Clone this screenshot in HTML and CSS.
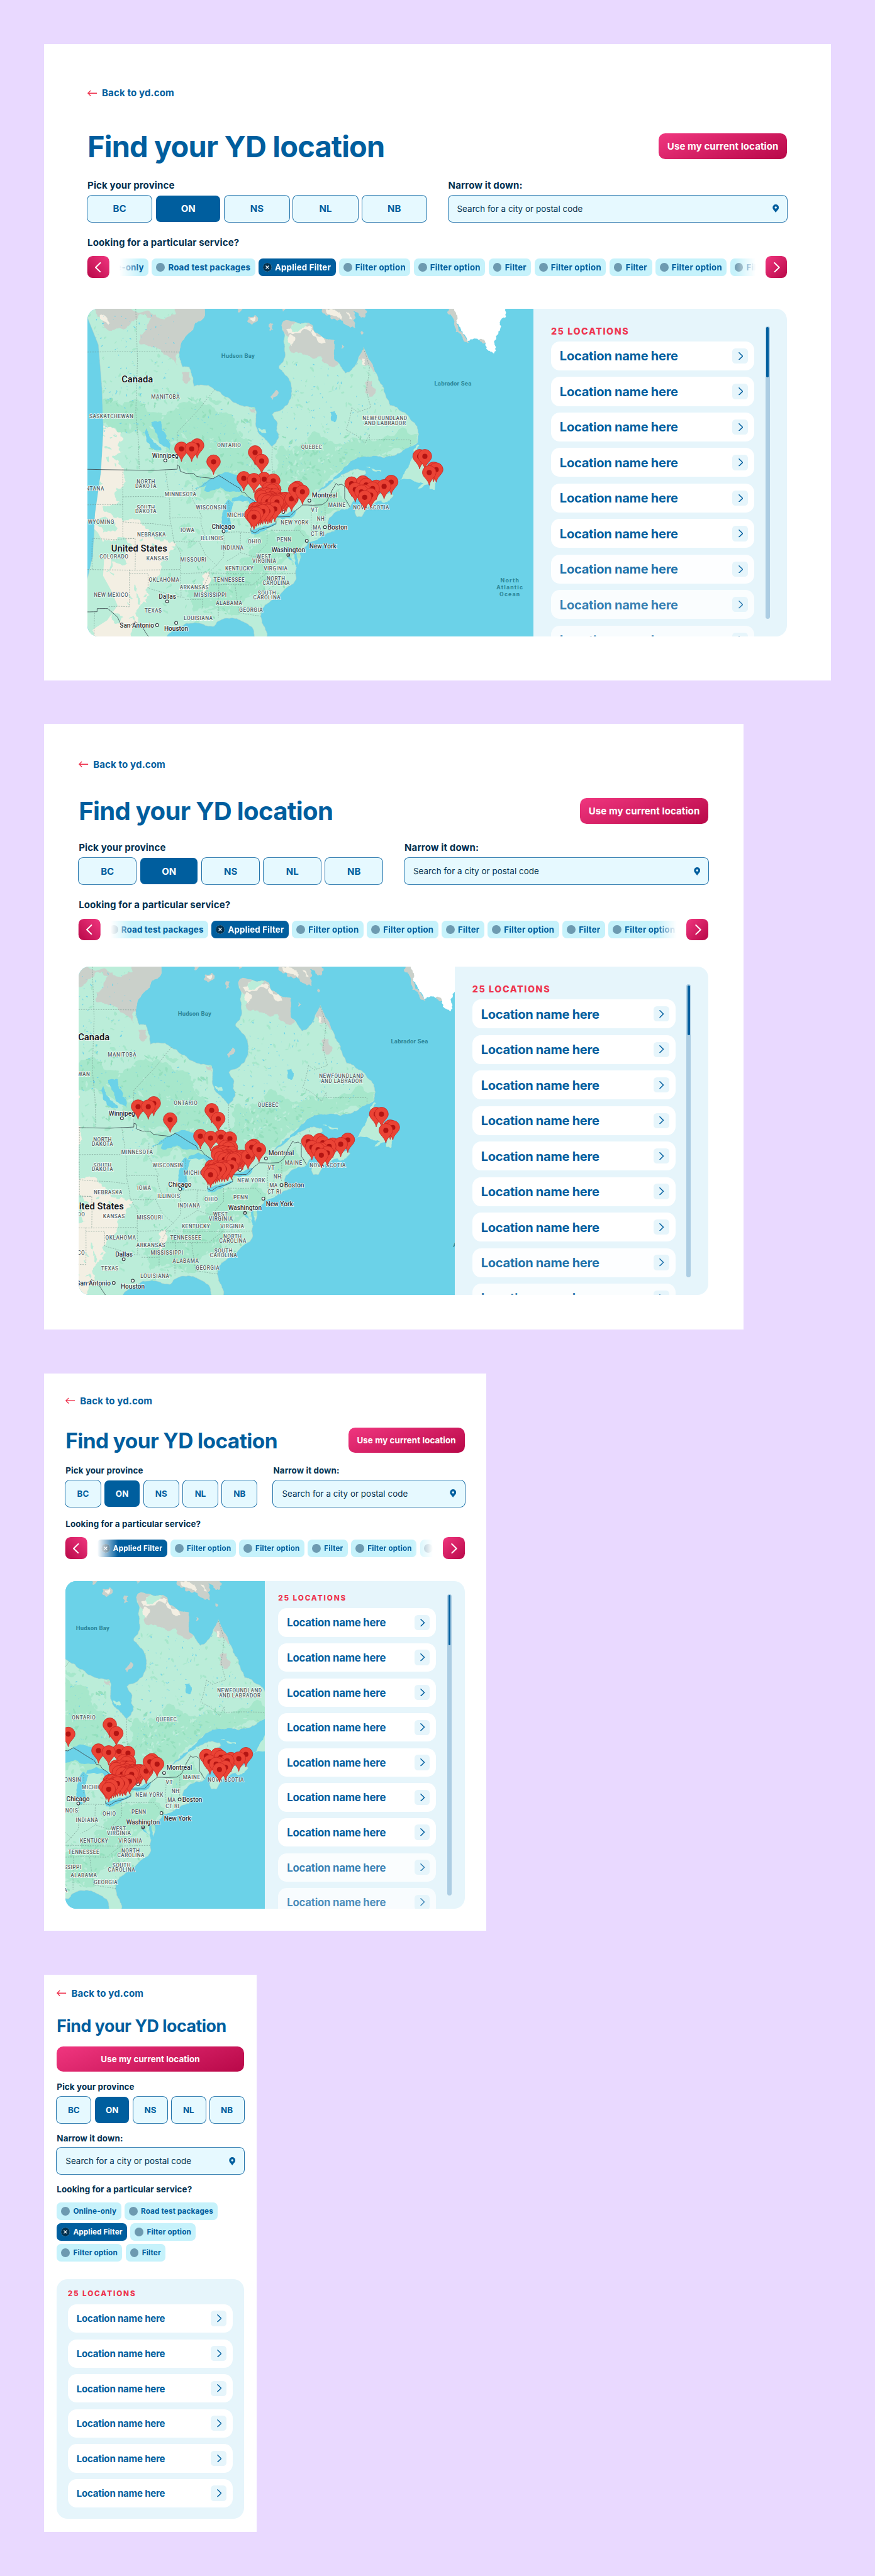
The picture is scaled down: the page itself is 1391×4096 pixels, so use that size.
FILE: index.html
```html
<!DOCTYPE html>
<html lang="en">
<head>
<meta charset="utf-8">
<title>Find your YD location</title>
<link rel="stylesheet" href="styles.css">
</head>
<body>
<svg class="sprite" aria-hidden="true">
  <symbol id="arrow" viewBox="0 0 18 12"><path d="M17.5 6H1M6 1 1 6l5 5" fill="none" stroke="#ee334e" stroke-width="1.6"/></symbol>
  <symbol id="chevron" viewBox="0 0 10 16"><path d="M1.2 1 8.4 8l-7.2 7" fill="none" stroke="currentColor" stroke-width="1.9" stroke-linecap="round" stroke-linejoin="round"/></symbol>
  <symbol id="pin" viewBox="0 0 12 15"><path d="M6 0a5.7 5.7 0 0 0-5.7 5.7C.3 9.4 4 11.500 6 15c2-3.500 5.700-5.600 5.700-9.300A5.700 5.700 0 0 0 6 0zm0 3.700a2 2 0 1 1 0 4 2 2 0 0 1 0-4z" fill="#005e9e"/></symbol>
  <symbol id="cross" viewBox="0 0 16 16"><circle cx="8" cy="8" r="8" fill="#00304f"/><path d="m5.200 5.200 5.600 5.600m0-5.600-5.600 5.600" stroke="#fff" stroke-width="1.300"/></symbol>
</svg>

<main class="board">

<section class="frame frame-xl">
  <a class="back"><svg class="back-arrow"><use href="#arrow"/></svg>Back to yd.com</a>
  <header class="heading"><h1>Find your YD location</h1><button class="cta">Use my current location</button></header>
  <div class="fields">
    <div class="field"><div class="label">Pick your province</div><div class="provinces"><span>BC</span><span class="on">ON</span><span>NS</span><span>NL</span><span>NB</span></div></div>
    <div class="field"><div class="label">Narrow it down:</div><div class="search">Search for a city or postal code<svg class="pin"><use href="#pin"/></svg></div></div>
  </div>
  <div class="label service">Looking for a particular service?</div>
  <div class="carousel">
    <button class="nav prev"><svg><use href="#chevron"/></svg></button>
    <div class="track"><div class="chips">
      <span class="chip"><i></i>Online-only</span><span class="chip"><i></i>Road test packages</span><span class="chip applied"><svg><use href="#cross"/></svg>Applied Filter</span><span class="chip"><i></i>Filter option</span><span class="chip"><i></i>Filter option</span><span class="chip"><i></i>Filter</span><span class="chip"><i></i>Filter option</span><span class="chip"><i></i>Filter</span><span class="chip"><i></i>Filter option</span><span class="chip"><i></i>Filter option</span>
    </div></div>
    <button class="nav next"><svg><use href="#chevron"/></svg></button>
  </div>
  <div class="finder">
    <div class="map"></div>
    <div class="panel">
      <div class="results"><div class="count">25 LOCATIONS</div><ul class="list">
        <li>Location name here<b><svg><use href="#chevron"/></svg></b></li><li>Location name here<b><svg><use href="#chevron"/></svg></b></li><li>Location name here<b><svg><use href="#chevron"/></svg></b></li><li>Location name here<b><svg><use href="#chevron"/></svg></b></li><li>Location name here<b><svg><use href="#chevron"/></svg></b></li><li>Location name here<b><svg><use href="#chevron"/></svg></b></li><li class="fade-1">Location name here<b><svg><use href="#chevron"/></svg></b></li><li class="fade-2">Location name here<b><svg><use href="#chevron"/></svg></b></li><li class="fade-3">Location name here<b><svg><use href="#chevron"/></svg></b></li>
      </ul></div>
      <div class="scrollbar"><div class="thumb"></div></div>
    </div>
  </div>
</section>

<section class="frame frame-lg">
  <a class="back"><svg class="back-arrow"><use href="#arrow"/></svg>Back to yd.com</a>
  <header class="heading"><h1>Find your YD location</h1><button class="cta">Use my current location</button></header>
  <div class="fields">
    <div class="field"><div class="label">Pick your province</div><div class="provinces"><span>BC</span><span class="on">ON</span><span>NS</span><span>NL</span><span>NB</span></div></div>
    <div class="field"><div class="label">Narrow it down:</div><div class="search">Search for a city or postal code<svg class="pin"><use href="#pin"/></svg></div></div>
  </div>
  <div class="label service">Looking for a particular service?</div>
  <div class="carousel">
    <button class="nav prev"><svg><use href="#chevron"/></svg></button>
    <div class="track"><div class="chips">
      <span class="chip"><i></i>Road test packages</span><span class="chip applied"><svg><use href="#cross"/></svg>Applied Filter</span><span class="chip"><i></i>Filter option</span><span class="chip"><i></i>Filter option</span><span class="chip"><i></i>Filter</span><span class="chip"><i></i>Filter option</span><span class="chip"><i></i>Filter</span><span class="chip"><i></i>Filter option</span>
    </div></div>
    <button class="nav next"><svg><use href="#chevron"/></svg></button>
  </div>
  <div class="finder">
    <div class="map"></div>
    <div class="panel">
      <div class="results"><div class="count">25 LOCATIONS</div><ul class="list">
        <li>Location name here<b><svg><use href="#chevron"/></svg></b></li><li>Location name here<b><svg><use href="#chevron"/></svg></b></li><li>Location name here<b><svg><use href="#chevron"/></svg></b></li><li>Location name here<b><svg><use href="#chevron"/></svg></b></li><li>Location name here<b><svg><use href="#chevron"/></svg></b></li><li>Location name here<b><svg><use href="#chevron"/></svg></b></li><li>Location name here<b><svg><use href="#chevron"/></svg></b></li><li class="fade-1">Location name here<b><svg><use href="#chevron"/></svg></b></li><li class="fade-2">Location name here<b><svg><use href="#chevron"/></svg></b></li>
      </ul></div>
      <div class="scrollbar"><div class="thumb"></div></div>
    </div>
  </div>
</section>

<section class="frame frame-md">
  <a class="back"><svg class="back-arrow"><use href="#arrow"/></svg>Back to yd.com</a>
  <header class="heading"><h1>Find your YD location</h1><button class="cta">Use my current location</button></header>
  <div class="fields">
    <div class="field"><div class="label">Pick your province</div><div class="provinces"><span>BC</span><span class="on">ON</span><span>NS</span><span>NL</span><span>NB</span></div></div>
    <div class="field"><div class="label">Narrow it down:</div><div class="search">Search for a city or postal code<svg class="pin"><use href="#pin"/></svg></div></div>
  </div>
  <div class="label service">Looking for a particular service?</div>
  <div class="carousel">
    <button class="nav prev"><svg><use href="#chevron"/></svg></button>
    <div class="track"><div class="chips">
      <span class="chip applied"><svg><use href="#cross"/></svg>Applied Filter</span><span class="chip"><i></i>Filter option</span><span class="chip"><i></i>Filter option</span><span class="chip"><i></i>Filter</span><span class="chip"><i></i>Filter option</span><span class="chip"><i></i>Filter</span>
    </div></div>
    <button class="nav next"><svg><use href="#chevron"/></svg></button>
  </div>
  <div class="finder">
    <div class="map"></div>
    <div class="panel">
      <div class="results"><div class="count">25 LOCATIONS</div><ul class="list">
        <li>Location name here<b><svg><use href="#chevron"/></svg></b></li><li>Location name here<b><svg><use href="#chevron"/></svg></b></li><li>Location name here<b><svg><use href="#chevron"/></svg></b></li><li>Location name here<b><svg><use href="#chevron"/></svg></b></li><li>Location name here<b><svg><use href="#chevron"/></svg></b></li><li>Location name here<b><svg><use href="#chevron"/></svg></b></li><li>Location name here<b><svg><use href="#chevron"/></svg></b></li><li class="fade-2">Location name here<b><svg><use href="#chevron"/></svg></b></li><li class="fade-3">Location name here<b><svg><use href="#chevron"/></svg></b></li>
      </ul></div>
      <div class="scrollbar"><div class="thumb"></div></div>
    </div>
  </div>
</section>

<section class="frame frame-sm">
  <a class="back"><svg class="back-arrow"><use href="#arrow"/></svg>Back to yd.com</a>
  <header class="heading"><h1>Find your YD location</h1><button class="cta">Use my current location</button></header>
  <div class="fields">
    <div class="field"><div class="label">Pick your province</div><div class="provinces"><span>BC</span><span class="on">ON</span><span>NS</span><span>NL</span><span>NB</span></div></div>
    <div class="field"><div class="label">Narrow it down:</div><div class="search">Search for a city or postal code<svg class="pin"><use href="#pin"/></svg></div></div>
  </div>
  <div class="label service">Looking for a particular service?</div>
  <div class="chips">
    <span class="chip"><i></i>Online-only</span><span class="chip"><i></i>Road test packages</span><span class="chip applied"><svg><use href="#cross"/></svg>Applied Filter</span><span class="chip"><i></i>Filter option</span><span class="chip"><i></i>Filter option</span><span class="chip"><i></i>Filter</span>
  </div>
  <div class="finder">
    <div class="panel">
      <div class="results"><div class="count">25 LOCATIONS</div><ul class="list">
        <li>Location name here<b><svg><use href="#chevron"/></svg></b></li><li>Location name here<b><svg><use href="#chevron"/></svg></b></li><li>Location name here<b><svg><use href="#chevron"/></svg></b></li><li>Location name here<b><svg><use href="#chevron"/></svg></b></li><li>Location name here<b><svg><use href="#chevron"/></svg></b></li><li>Location name here<b><svg><use href="#chevron"/></svg></b></li>
      </ul></div>
    </div>
  </div>
</section>

</main>
<script src="map.js"></script>
</body>
</html>
```
FILE: styles.css
```css
*{box-sizing:border-box}
html{background:#e9d9ff;zoom:.869}
body{margin:0;font-family:Inter,"Open Sans",sans-serif;font-weight:700;color:#00304f}
button{border:0;padding:0;font:inherit;color:#fff}
ul{list-style:none;margin:0;padding:0}
.sprite{display:none}

.board{display:flex;flex-direction:column;align-items:flex-start;gap:80px;padding:80px}

/* ---- frame sizes ---- */
.frame{display:flex;flex-direction:column;align-items:stretch;background:#fff;
  --h1:54px;--body:17.3px;--chip:15.4px;--name:23.1px;--gap:40px;--cta-h:48px;--field-h:48px;
  --label-gap:9px;--chips-shift:0px}
.frame-xl{width:1440px;height:1165px;padding:80px;--after-back:63.5px;--after-head:37.5px;--before-map:56px;--map:816px;--chips-shift:-73px}
.frame-lg{width:1280px;height:1108px;padding:64px;--h1:46.2px;--after-back:51px;--after-head:33px;--before-map:48px;--map:688px;--chips-shift:-8px}
.frame-md{width:810px;height:1020px;padding:40px;--h1:38.5px;--body:15.4px;--chip:13.5px;--name:19.3px;--gap:30px;--cta-h:46px;--label-gap:7.5px;
  --after-back:39px;--after-head:23.5px;--before-map:40px;--map:365px;--chips-shift:1px}
.frame-sm{width:390px;height:1020px;padding:24px;--h1:30.8px;--body:15.4px;--chip:13.5px;--name:17.3px;--gap:18px;--cta-h:46px;--label-gap:7.5px;
  --after-back:31px;--after-head:18.5px;--before-map:32px}

/* ---- header ---- */
.back{display:flex;align-items:center;gap:8.5px;height:20px;font-size:17.3px;line-height:20px;color:#005e9e;letter-spacing:.16px}
.back-arrow{width:18px;height:12px}
.heading{display:flex;align-items:center;justify-content:space-between;height:var(--cta-h);margin-top:var(--after-back)}
h1{margin:0;font-size:var(--h1);line-height:1.2;letter-spacing:-.0175em;color:#005e9e;padding-top:2px;white-space:nowrap}
.cta{height:var(--cta-h);padding:0 16px;border-radius:12px;font-size:var(--body);letter-spacing:.006em;white-space:nowrap;
  background:linear-gradient(160deg,#f0367f,#b80848)}
.frame-sm .heading{flex-direction:column;align-items:stretch;height:auto;gap:19px}
.frame-sm h1{line-height:38px;padding:0}

/* ---- fields ---- */
.fields{display:grid;grid-template-columns:1fr 1fr;gap:var(--gap);margin-top:var(--after-head)}
.frame-sm .fields{grid-template-columns:1fr}
.label{font-size:var(--body);line-height:20px;letter-spacing:.008em}
.provinces{display:grid;grid-template-columns:repeat(5,1fr);gap:8px;margin-top:var(--label-gap)}
.provinces span,.search{height:var(--field-h);border-radius:8px;background:#e6f9ff;box-shadow:0 0 0 1px #005e9e}
.provinces span{display:flex;align-items:center;justify-content:center;font-size:var(--body);color:#005e9e}
.provinces .on{background:#005e9e;color:#fff;box-shadow:none}
.search{display:flex;align-items:center;justify-content:space-between;padding:0 15px 0 16px;margin-top:var(--label-gap);
  font-weight:400;font-size:15.4px;letter-spacing:.06px}
.pin{width:12px;height:15px}

/* ---- service filters ---- */
.service{margin-top:28px;letter-spacing:.009em}
.frame-md .service{margin-top:22.5px}
.frame-sm .service{margin-top:18.5px}
.carousel{display:flex;align-items:center;gap:16px;margin-top:15px}
.frame-md .carousel{margin-top:13.5px}
.nav{flex:none;display:flex;align-items:center;justify-content:center;width:40px;height:40px;border-radius:10px;background:linear-gradient(135deg,#f0367f,#b80848)}
.nav svg{width:12px;height:19px;margin-left:2px}
.prev{transform:scaleX(-1)}
.track{flex:1;min-width:0;overflow:hidden;-webkit-mask-image:linear-gradient(90deg,transparent 2px,#000 40px,#000 calc(100% - 40px),transparent calc(100% - 2px));mask-image:linear-gradient(90deg,transparent 2px,#000 40px,#000 calc(100% - 40px),transparent calc(100% - 2px))}
.chips{display:flex;gap:6px}
.track .chips{margin-left:var(--chips-shift)}
.frame-sm .chips{flex-wrap:wrap;margin-top:13.5px}
.chip{flex:none;display:flex;align-items:center;gap:6px;height:32px;padding:0 8.7px 0 8px;border-radius:8px;background:#c6f2fb;color:#005e9e;font-size:var(--chip);letter-spacing:.16px}
.chip i,.chip svg{width:16px;height:16px;border-radius:50%;background:#6d9ab0}
.applied{background:#005e9e;color:#fff}

/* ---- map and results ---- */
.finder{display:flex;height:600px;margin-top:var(--before-map);border-radius:20px;overflow:hidden;background:#e6f5fb}
.map{flex:none;display:flex;justify-content:center;width:var(--map);overflow:hidden;background:#6bd2e8}
.map svg{flex:none;width:816px;height:600px}
.panel{flex:1;display:flex;justify-content:space-between;padding:32px}
.results{width:372px}
.count{height:16px;margin-bottom:12px;font-size:16.5px;font-weight:800;line-height:18px;letter-spacing:1.8px;color:#ee334e}
.list{display:flex;flex-direction:column;gap:12px}
.list li{flex:none;display:flex;align-items:center;justify-content:space-between;height:53px;padding:1px 12px 0 16px;border-radius:16px;background:#fff;
  font-size:var(--name);letter-spacing:-.0135em;color:#005e9e}
.list b{display:flex;align-items:center;justify-content:center;width:28px;height:28px;margin-top:-1px;border-radius:6px;background:#e6f5fb}
.list b svg{width:9px;height:14.500px;margin-left:2px}
.list .fade-1{color:rgba(0,94,158,.9);background:rgba(255,255,255,.9)}
.list .fade-2{color:rgba(0,94,158,.8);background:rgba(255,255,255,.8)}
.list .fade-3{color:rgba(0,94,158,.7);background:rgba(255,255,255,.7)}
.scrollbar{width:8px;height:536px;padding:2px;border-radius:4px;background:#accde3}
.thumb{width:4px;height:91px;border-radius:2px;background:#005e9e}

.frame-md .panel{padding:24px}
.frame-md .results{width:289px}
.frame-md .scrollbar{height:552px}
.frame-md .count,.frame-sm .count{height:14px;font-size:13.500px;line-height:14px;letter-spacing:2.150px}
.frame-md .list li,.frame-sm .list li{height:52px}
.frame-sm .finder{height:438px}
.frame-sm .panel{padding:20px}
.frame-sm .results{width:auto;flex:1}
```
FILE: map.js
```js
// Draws the eastern North America map into every .map element (816 x 600 units).
// Shapes come from two source grids: a wide one (w) and a finer one (d).
const w = (x, y) => [(x - 37) / 1.8667, (y - 37) / 2.45];
const d = (x, y) => [x / 3 + 150, y / 3 + 225];
const pts = (grid, text) => text.trim().split(/\s+/).map(p => grid(...p.split(',').map(Number)));

let seed = 7;
const rnd = () => (seed = (seed * 16807) % 2147483647) / 2147483647;

// Splits each edge in halves with small offsets so that coasts look irregular.
function rough(points, closed, amount, depth) {
  let list = points;
  for (let k = 0; k < depth; k++) {
    const next = [];
    const n = closed ? list.length : list.length - 1;
    for (let i = 0; i < n; i++) {
      const a = list[i], b = list[(i + 1) % list.length];
      const len = Math.hypot(b[0] - a[0], b[1] - a[1]);
      next.push(a);
      if (len > 3) {
        const r = (rnd() - 0.5) * amount * len;
        next.push([(a[0] + b[0]) / 2 - (b[1] - a[1]) / len * r, (a[1] + b[1]) / 2 + (b[0] - a[0]) / len * r]);
      }
    }
    if (!closed) next.push(list[list.length - 1]);
    list = next;
  }
  return list;
}
const path = (p, closed) => 'M' + p.map(q => q[0].toFixed(1) + ' ' + q[1].toFixed(1)).join('L') + (closed ? 'Z' : '');
const area = (p, fill, amount = 0.35, depth = 3, extra = '') => `<path d="${path(rough(p, true, amount, depth), true)}" fill="${fill}" ${extra}/>`;

const LAND = '#bbedd9', VEG = '#a6e7cb', DEEP = '#94dfbd', ROCK = '#cad0ca', SAND = '#f3efe3', WATER = '#6bd2e8';

const mainland = rough(pts(w, `20,20 438,20 438,50 437,70 425,90 405,100 398,130 380,150 368,170 357,190 352,225 350,250 357,280 362,298 385,298 390,320 398,350 400,385 425,378 450,380 470,398 490,410 500,425 530,450 560,470 585,475 608,480 614,500 612,540 615,570 625,600 645,625 660,645 668,655 680,640 690,615 690,600 683,585 686,550 675,530 668,510 675,500 705,485 722,465 732,435 734,400 732,370 722,345 708,325 692,305 692,292 705,275 712,250 710,220 708,190 710,150 700,110 705,95 715,88 740,95 765,105 790,100 805,110 812,140 835,160 860,175 880,178 880,205 878,240 880,265 895,280 905,300 918,325 940,310 952,290 962,260 970,240 980,210 988,235 997,262 1010,285 1015,305 1025,330 1030,355 1045,380 1050,410 1060,440 1070,470 1095,480 1115,500 1132,515 1145,540 1163,565 1168,600 1165,635 1150,650 1130,660 1110,680 1085,695 1050,705 1000,700 960,702 935,720 915,745 895,775 860,810 835,840 822,862 852,838 880,800 905,780 935,762 960,755 985,762 988,775 970,790 962,800 985,810 1000,830 1015,855 1045,868 1075,862 1082,875 1050,897 1020,905 1000,920 985,945 975,968 958,970 950,950 955,930 985,915 992,898 970,888 955,890 945,900 935,925 925,935 905,935 890,945 875,960 862,975 858,1000 870,1015 885,1020 880,1035 862,1040 850,1048 830,1065 800,1075 790,1085 785,1100 770,1120 760,1125 765,1150 758,1180 750,1200 748,1225 750,1245 740,1270 720,1285 700,1310 690,1325 660,1350 643,1365 635,1380 630,1405 632,1430 640,1460 650,1490 653,1520 612,1520 605,1480 600,1465 585,1450 570,1440 545,1425 520,1425 500,1428 480,1440 470,1460 450,1460 430,1450 400,1445 370,1450 345,1470 320,1490 300,1520 20,1520`), true, 0.22, 3);

const islands = [
  '1165,645 1150,670 1140,720 1120,770 1100,810 1150,808 1175,815 1185,820 1165,842 1180,838 1195,825 1210,820 1205,845 1222,850 1228,810 1238,790 1215,770 1200,740 1180,700 1160,680 1170,650',
  '988,745 1000,745 1040,760 1040,768 1015,765',
];

function shapes() {
  let s = `<rect width="816" height="600" fill="${WATER}"/>`;
  s += `<clipPath id="land"><path d="${path(mainland, true)}"/></clipPath>`;
  s += `<path d="${path(mainland, true)}" fill="${LAND}" stroke="#b3cfc8" stroke-width=".6"/>`;
  islands.forEach(t => s += area(pts(w, t), LAND, 0.3));
  s += area(pts(d, '1160,380 1190,370 1215,345 1225,350 1210,375 1180,390'), LAND);
  s += area(pts(d, '752,603 780,592 815,584 820,588 790,600 765,607'), LAND, 0.1, 1);

  s += '<g clip-path="url(#land)">';
  ['20,410 200,440 340,480 460,470 540,530 600,640 640,800 600,900 520,890 480,780 350,750 300,640 200,580 100,545 20,530',
   '700,650 800,600 900,640 1000,620 1170,600 1150,660 1050,710 950,710 860,800 780,880 700,880 680,760',
   '650,1030 760,1000 800,1080 700,1180 640,1300 560,1400 480,1390 400,1400 380,1300 450,1250 560,1180 600,1100',
   '805,900 900,840 930,900 850,960 820,1020', '380,760 480,790 540,880 420,880'
  ].forEach(t => s += area(pts(w, t), VEG, 0.6, 4));

  // Scattered forest patches.
  const patches = (x0, y0, x1, y1, n, fill, size) => {
    for (let i = 0; i < n; i++) {
      const cx = x0 + rnd() * (x1 - x0), cy = y0 + rnd() * (y1 - y0), r = size * (0.4 + rnd());
      const [px, py] = w(cx, cy), tilt = rnd() * 3, ring = [];
      for (let k = 0; k < 6; k++) {
        const a = k / 6 * Math.PI * 2, q = r * (0.4 + rnd() * 0.8);
        const ex = Math.cos(a) * q * 1.5, ey = Math.sin(a) * q * 0.6;
        ring.push([px + ex * Math.cos(tilt) - ey * Math.sin(tilt), py + ex * Math.sin(tilt) + ey * Math.cos(tilt)]);
      }
      s += area(ring, fill, 0.5, 1);
    }
  };
  patches(37, 400, 640, 780, 110, VEG, 5);
  patches(37, 440, 600, 760, 80, DEEP, 3.500);
  patches(37, 480, 600, 780, 50, LAND, 4);
  patches(640, 600, 1160, 840, 110, DEEP, 3.500);
  patches(700, 620, 1100, 820, 60, LAND, 3.500);
  patches(700, 250, 1100, 600, 70, VEG, 3);
  patches(300, 760, 740, 1450, 110, VEG, 5);
  patches(380, 1000, 740, 1420, 80, LAND, 4);
  patches(400, 1180, 720, 1420, 60, DEEP, 3);
  patches(37, 60, 340, 400, 50, VEG, 3);

  // Tundra and bare rock.
  ['68,60 90,100 110,135 160,130 200,85 235,60 260,80 240,120 215,150 215,195 250,205 290,230 325,260 345,290 342,240 360,232 380,170 410,130 445,100 450,20 330,20 340,60 300,85 240,45 100,20 60,30',
   '360,320 385,320 392,350 378,372 362,345', '590,482 612,485 610,510 596,500',
   '690,100 715,80 740,90 805,100 820,140 900,170 890,240 890,290 850,280 835,250 790,245 740,235 725,210 735,160 712,150',
   '980,200 1020,285 1015,320 1000,290 975,280 966,240', '985,370 1008,360 1020,395 1000,432 985,410'
  ].forEach(t => s += area(pts(w, t), ROCK, 0.5, 4));
  ['715,130 760,105 805,120 800,140 740,150', '730,150 745,180 735,205 722,180', '805,130 845,160 850,190 820,170', '80,65 105,85 108,110 90,90', '972,255 985,262 985,290 974,285',
  ].forEach(t => s += area(pts(w, t), SAND, 0.6, 3));
  s += area(pts(w, '738,110 790,105 760,135 735,140'), LAND, 0.5);

  // Prairies and high plains.
  s += area(pts(w, '20,560 90,560 150,590 160,620 140,650 160,680 120,700 150,740 165,800 130,860 150,905 90,920 120,960 160,990 220,1000 260,1050 300,1070 340,1090 320,1120 300,1160 290,1190 260,1240 240,1290 250,1320 215,1370 200,1400 210,1440 190,1520 20,1520'), SAND, 0.6, 4);
  ['60,1000 110,985 140,1020 90,1040', '95,1070 140,1060 190,1095 165,1130 180,1180 120,1170 130,1240 100,1215 110,1150 70,1120', '37,1080 70,1090 60,1200 37,1230', '40,700 80,720 60,750 37,740', '120,1390 160,1420 150,1450 120,1430', '37,1420 70,1440 60,1500 37,1500', '37,800 60,790 90,820 60,880 37,860', '430,1230 450,1215 455,1240 440,1300 425,1320 432,1270'
  ].forEach((t, i) => s += area(pts(w, t), i === 7 ? SAND : LAND, 0.6, 3));
  patches(37, 570, 150, 740, 14, LAND, 3.500);
  patches(200, 960, 340, 1180, 16, LAND, 4);
  patches(160, 1200, 250, 1450, 10, LAND, 4);

  // Lakes.
  patches(37, 60, 350, 640, 130, WATER, 1.500);
  patches(350, 480, 640, 760, 60, WATER, 1.100);
  patches(700, 280, 1120, 640, 95, WATER, 1.500);
  patches(700, 640, 980, 800, 40, WATER, 1.100);
  patches(300, 760, 470, 900, 24, WATER, 1);
  patches(760, 860, 940, 960, 14, WATER, 1);
  s += '</g>';

  ['255,545 285,540 290,570 300,590 305,620 320,650 318,672 300,655 280,620 268,590', '238,570 248,600 262,635 290,670 275,670 250,645 236,605', '30,262 80,268 60,282 30,285', '865,500 882,495 890,515 880,545 868,530', '850,835 905,775 940,745 915,745 895,775 850,820'
  ].forEach(t => s += area(pts(w, t), WATER, 0.4));
  ['140,310 200,275 240,255 270,235 330,225 375,240 400,280 400,325 330,330 280,305 240,320 215,330 190,322 205,295 150,315',
   '290,460 300,400 325,372 340,385 355,388 340,430 332,470 335,520 320,550 296,552 288,510',
   '345,365 400,345 440,360 480,385 500,440 470,420 440,395 430,378 380,378 340,382',
   '445,545 475,532 520,515 580,500 588,508 540,530 500,550 470,565 450,562',
   '580,474 610,455 660,440 700,425 670,472 620,480'
  ].forEach(t => s += area(pts(d, t), WATER, 0.25));
  ['690,650 700,690 710,740 695,745 690,700 680,660', '650,690 690,720 680,712 648,675'
  ].forEach(t => s += area(pts(d, t), WATER, 0.25));
  s += area(pts(d, '345,420 360,385 385,380 410,395 420,430'), LAND, 0.3);

  // Arctic islands and Greenland.
  ['835,20 980,20 985,75 970,75 945,50 945,90 952,122 920,110 890,90 865,65 840,55', '585,75 610,65 620,80 600,108 583,95', '545,20 568,20 565,40 550,52', '660,100 672,105 672,130 660,137 655,115', '695,20 712,20 712,42 705,50', '905,198 915,208 905,217', '970,135 980,145 972,152', '662,432 680,400 690,412 680,430 668,446', '1265,20 1300,20 1300,90 1330,170 1340,190 1315,160 1290,110 1282,70 1266,50', '1375,172 1395,172 1410,205 1385,190'
  ].forEach(t => s += area(pts(w, t), ROCK, 0.5));
  ['850,40 890,50 905,85 870,65', '920,50 940,85 930,80', '592,80 608,72 605,95'].forEach(t => s += area(pts(w, t), SAND, 0.5));
  s += area(pts(w, '620,572 645,578 648,592 632,595'), LAND);
  s += area(pts(w, '1285,20 1475,20 1465,60 1450,85 1450,115 1440,140 1432,160 1425,185 1432,210 1425,238 1410,225 1395,200 1390,175 1360,170 1335,182 1320,150 1310,120 1296,90 1296,60'), '#fff', 0.5, 4);
  return s;
}

function borders() {
  let s = '<g fill="none" stroke="#3c4b50" stroke-width="1">';
  [[w, '20,756 344,756'], [d, '43,205 43,186 54,188 60,217 90,228 130,228 150,245 180,250 240,257 270,240 385,310 395,330 415,335 430,355 470,385'],
   [d, '580,466 660,466 685,440 730,402 838,401 865,380 885,340 890,325 915,283 925,293 945,288 962,300 962,368 972,380 990,412'],
   [d, '447,530 447,545 470,555 500,535 550,522 585,505 585,490'], [w, '20,1395 70,1395 70,1381 107,1381 140,1420 150,1450 180,1460 200,1440 225,1465 247,1510']
  ].forEach(([g, t]) => s += `<path d="${path(rough(pts(g, t), false, 0.04, 2))}"/>`);
  s += '</g><g fill="none" stroke="#6f8f88" stroke-opacity=".75" stroke-width=".9" stroke-dasharray="2.5 2">';
  ['37,231 350,231', '202,37 202,500 214,756', '344,738 344,590 472,398', '158,756 158,1065', '158,880 305,880', '37,916 158,916', '158,992 260,1000 320,1010', '302,756 318,900 318,975 425,975', '318,975 332,1080 355,1130 357,1330', '200,1206 200,1067 53,1067 53,1206', '37,1206 355,1206', '180,1206 180,1373 107,1373', '180,1224 244,1224 244,1290 330,1325 370,1330', '357,1224 490,1222 748,1222', '332,1080 418,1080', '502,1040 502,1150 450,1222', '560,1040 560,1130 510,1170', '502,1040 595,1040', '650,1030 650,1090 610,1150 560,1130', '665,1030 760,1030 780,1060', '803,915 803,1060', '848,915 848,1000', '486,1275 484,1420', '541,1275 555,1400 630,1415', '370,1340 430,1340', '450,1275 600,1275 650,1222', '455,1222 430,1300 430,1380', '668,655 670,780 700,850', '940,480 930,540 920,580 950,600 985,640 1000,600 1000,625 1140,625 1140,650', '980,215 1000,300 990,400 1005,480 960,500 940,480', '425,975 425,1000 440,1060 418,1080 440,1140 480,1190', '395,830 395,890 430,975', '395,860 460,800', '505,920 520,900 520,990', '158,1065 200,1067', '62,1400 60,1507'
  ].forEach(t => s += `<path d="${path(rough(pts(w, t), false, 0.05, 1))}"/>`);
  return s + '</g>';
}

function labels() {
  const put = (cls, rows, dy) => rows.map(([t, x, y]) => { const [px, py] = w(x, y); return `<text class="${cls}" x="${px.toFixed(1)}" y="${(py + dy).toFixed(1)}">${t}</text>`; }).join('');
  let s = `<style>text{font-family:Roboto,sans-serif;text-anchor:middle}
.st{font-size:9.4px;font-weight:500;letter-spacing:.6px;fill:#535f63;stroke:#fff;stroke-opacity:.8;stroke-width:2px;paint-order:stroke}
.ct{font-size:11.600px;font-weight:500;fill:#2b3236;stroke:#fff;stroke-opacity:.85;stroke-width:2px;paint-order:stroke}
.co{font-size:17px;font-weight:600;fill:#15191b;stroke:#fff;stroke-opacity:.85;stroke-width:2px;paint-order:stroke}
.sea{font-size:11px;fill:#2b8596;letter-spacing:.2px}.oc{font-size:11px;fill:#2b8596;letter-spacing:1.4px}</style>`;
  s += put('st', [['MANITOBA', 304, 431], ['SASKATCHEWAN', 119, 520], ['ONTARIO', 521, 648], ['QUEBEC', 803, 656], ['NEWFOUNDLAND', 1053, 527], ['AND LABRADOR', 1054, 549], ['NORTH', 237, 813], ['DAKOTA', 237, 832], ['MONTANA', 48, 842], ['MINNESOTA', 355, 870], ['SOUTH', 237, 927], ['DAKOTA', 237, 946], ['WISCONSIN', 460, 928], ['MICHIGAN', 561, 962], ['WYOMING', 84, 993], ['IOWA', 379, 1030], ['NEBRASKA', 256, 1048], ['ILLINOIS', 463, 1066], ['INDIANA', 532, 1108], ['OHIO', 608, 1081], ['PENN', 709, 1072], ['NEW YORK', 745, 996], ['VT', 813, 940], ['NH', 834, 978], ['MA', 821, 1017], ['CT RI', 824, 1046], ['MAINE', 889, 917], ['NOVA SCOTIA', 1006, 928], ['COLORADO', 128, 1149], ['KANSAS', 276, 1155], ['MISSOURI', 399, 1162], ['WEST', 640, 1147], ['VIRGINIA', 641, 1168], ['KENTUCKY', 556, 1202], ['VIRGINIA', 680, 1202], ['OKLAHOMA', 299, 1251], ['TENNESSEE', 521, 1251], ['NORTH', 681, 1245], ['CAROLINA', 682, 1266], ['ARKANSAS', 402, 1285], ['NEW MEXICO', 118, 1320], ['MISSISSIPPI', 457, 1320], ['SOUTH', 650, 1310], ['CAROLINA', 650, 1332], ['ALABAMA', 521, 1356], ['GEORGIA', 596, 1387], ['TEXAS', 262, 1390], ['LOUISIANA', 416, 1425]], 3.5);
  s += put('ct', [['Winnipeg', 303, 694], ['Montreal', 847, 873], ['Chicago', 501, 1012], ['Boston', 891, 1017], ['New York', 841, 1101], ['Washington', 723, 1117], ['Dallas', 310, 1326], ['San Antonio', 206, 1457], ['Houston', 340, 1470]], 4.3);
  s += put('co', [['Canada', 207, 351], ['United States', 214, 1111]], 6);
  s += put('sea', [['Hudson Bay', 551, 248], ['Labrador Sea', 1285, 372]], 4);
  s += put('oc', [['North', 1480, 1253], ['Atlantic', 1480, 1284], ['Ocean', 1480, 1315]], 4);
  [[303, 717], [795, 897], [502, 1034], [848, 1016], [786, 1077], [723, 1141], [309, 1349], [275, 1455], [340, 1445], [706, 948]].forEach(([x, y], i) => {
    const [px, py] = w(x, y);
    s += `<circle cx="${px}" cy="${py}" r="2.700" fill="#fff" stroke="#2b3236" stroke-width="1.200"/>`;
    if (i === 5) s += `<circle cx="${px}" cy="${py}" r="1.300" fill="#2b3236"/>`;
  });
  return s;
}

function pins() {
  return pts(d, `152,76 66,94 122,94 470,114 242,165 506,161 408,256 520,260 464,266 570,269
    545,315 575,318 562,325 505,345 515,352 532,345 548,352 505,358 580,350 560,365 595,368 545,370 572,374 520,376 640,370 632,370 620,370 585,378 555,380 568,384 610,376 600,380 540,384 575,388 590,386 670,368 702,309 690,317 730,330
    470,424 486,424 505,430 530,424 550,428 500,440 490,445 558,432 526,436 578,424 540,436 512,437 460,448 450,456 478,450 464,468
    1000,285 1062,279 1080,292 1135,303 1020,317 1217,276 1178,300 1115,312 1070,328 1054,330 1105,348 1072,360
    1373,135 1402,135 1450,204 1464,208 1426,224`)
    .map(([x, y]) => `<g transform="translate(${x.toFixed(1)} ${y.toFixed(1)})"><path d="M0 23.300C-1.800 12-12.500 8.500-12.500-.2a12.500 12.500 0 0 1 25 0C12.500 8.500 1.800 12 0 23.300Z" fill="#ea4335" stroke="#c5221f" stroke-width=".9"/><circle r="4.700" fill="#b31412"/></g>`).join('');
}

const markup = `<svg viewBox="0 0 816 600">${shapes()}${borders()}${labels()}${pins()}</svg>`;
document.querySelectorAll('.map').forEach((el, i) => { el.innerHTML = markup.replace('id="land"', `id="land${i}"`).replace('url(#land)', `url(#land${i})`); });
```
